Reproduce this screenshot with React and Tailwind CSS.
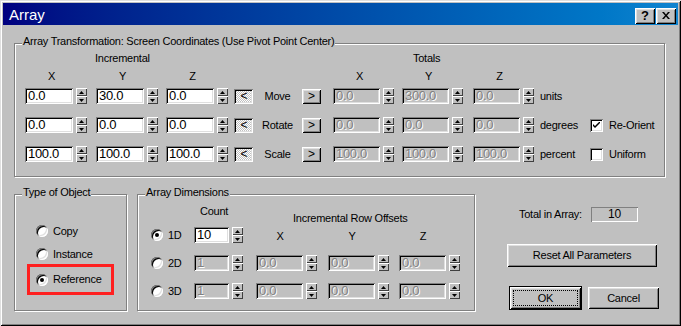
import React from "react";

const sunken =
  "shadow-[inset_1px_1px_#808080,inset_-1px_-1px_#fff,inset_2px_2px_#000,inset_-2px_-2px_#dfdfdf]";
const raised =
  "shadow-[inset_1px_1px_#fff,inset_-1px_-1px_#000,inset_2px_2px_#dfdfdf,inset_-2px_-2px_#808080]";
const raisedThin = "shadow-[inset_1px_1px_#fff,inset_-1px_-1px_#404040]";

function Edit({ value, className = "w-[48px]", disabled }) {
  return (
    <div
      className={`${className} h-[16px] shrink-0 ${sunken} pl-[3px] text-[13px] leading-[16px] tracking-[-0.3px] whitespace-nowrap overflow-hidden ${
        disabled
          ? "bg-[#c0c0c0] text-[#808080] [text-shadow:1px_1px_0_#fff]"
          : "bg-white text-black"
      }`}
    >
      {value}
    </div>
  );
}

function Spin({ className = "ml-[3px]" }) {
  return (
    <div className={`${className} w-[11px] h-[16px] shrink-0 flex flex-col`}>
      <div className={`h-[8px] bg-[#c0c0c0] ${raisedThin} flex items-center justify-center`}>
        <svg width="5" height="3" viewBox="0 0 5 3">
          <path d="M2.5 0L5 3H0z" fill="#000" />
        </svg>
      </div>
      <div className={`h-[8px] bg-[#c0c0c0] ${raisedThin} flex items-center justify-center`}>
        <svg width="5" height="3" viewBox="0 0 5 3">
          <path d="M0 0H5L2.5 3z" fill="#000" />
        </svg>
      </div>
    </div>
  );
}

function BackBtn() {
  return (
    <div
      className={`ml-[6px] w-[19px] h-[15px] shrink-0 ${sunken} bg-[repeating-conic-gradient(#fff_0_25%,#c0c0c0_0_50%)] bg-[length:2px_2px] flex items-center justify-center text-[12px] leading-none pl-[1px]`}
    >
      &lt;
    </div>
  );
}

function FwdBtn() {
  return (
    <div
      className={`w-[19px] h-[15px] shrink-0 bg-[#c0c0c0] ${raised} flex items-center justify-center text-[12px] leading-none`}
    >
      &gt;
    </div>
  );
}

function Check({ checked, label }) {
  return (
    <div className="flex items-center">
      <div className={`w-[13px] h-[13px] bg-white ${sunken} flex items-center justify-center`}>
        {checked && (
          <svg width="7" height="7" viewBox="0 0 7 7">
            <path d="M0 2v2l2 2l5-5V-1L2 4z" fill="#000" />
          </svg>
        )}
      </div>
      <span className="ml-[6px]">{label}</span>
    </div>
  );
}

function Radio({ on }) {
  return (
    <div
      className={`w-[12px] h-[12px] shrink-0 rounded-full bg-white shadow-[inset_1px_1px_#808080,inset_-1px_-1px_#fff,inset_2px_2px_#000,inset_-2px_-2px_#dfdfdf] flex items-center justify-center`}
    >
      {on && <div className="w-[4px] h-[4px] rounded-full bg-black" />}
    </div>
  );
}

function Group({ label, className, children }) {
  return (
    <div
      className={`relative shrink-0 border border-[#808080] shadow-[inset_1px_1px_#fff,1px_1px_#fff] ${className}`}
    >
      <span className="absolute -top-[9px] left-[7px] bg-[#c0c0c0] px-[1px] whitespace-nowrap">
        {label}
      </span>
      {children}
    </div>
  );
}

function TransformRow({ inc, label, totals, unit, check }) {
  return (
    <div className="flex items-center h-[16px]">
      <Edit value={inc[0]} />
      <Spin />
      <Edit value={inc[1]} className="w-[48px] ml-[9px]" />
      <Spin />
      <Edit value={inc[2]} className="w-[48px] ml-[8px]" />
      <Spin />
      <BackBtn />
      <span className="w-[49px] text-center">{label}</span>
      <FwdBtn />
      <Edit disabled value={totals[0]} className="w-[47px] ml-[12px]" />
      <Spin />
      <Edit disabled value={totals[1]} className="w-[47px] ml-[8px]" />
      <Spin />
      <Edit disabled value={totals[2]} className="w-[47px] ml-[10px]" />
      <Spin />
      <span className="ml-[6px] w-[50px]">{unit}</span>
      {check}
    </div>
  );
}

function Button({ children, className }) {
  return (
    <div className={`bg-[#c0c0c0] ${raised} flex items-center justify-center ${className}`}>
      {children}
    </div>
  );
}

export default function App() {
  return (
    <div className="w-[681px] h-[326px] bg-[#c0c0c0] p-[3px] flex flex-col text-black text-[11px] leading-[13px] tracking-[-0.25px] font-['Liberation_Sans',Arial,sans-serif] shadow-[inset_1px_1px_#dfdfdf,inset_-1px_-1px_#000,inset_2px_2px_#fff,inset_-2px_-2px_#808080] overflow-hidden">
      {/* title bar */}
      <div className="h-[22px] shrink-0 flex items-center pl-[6px] pr-[2px] bg-linear-to-r from-[#000080] to-[#1084d0]">
        <span className="text-white text-[15px] leading-none tracking-normal">Array</span>
        <div className="ml-auto mt-[3px] flex gap-[1px]">
          <div className={`w-[20px] h-[16px] bg-[#c0c0c0] ${raised} flex items-center justify-center font-bold text-[13px] leading-none tracking-normal`}>
            ?
          </div>
          <div className={`w-[20px] h-[16px] bg-[#c0c0c0] ${raised} flex items-center justify-center`}>
            <svg width="8" height="7" viewBox="0 0 8 7">
              <path d="M0 0h2l2 2.5L6 0h2L5 3.5L8 7H6L4 4.5L2 7H0l3-3.5z" fill="#000" />
            </svg>
          </div>
        </div>
      </div>

      {/* transformation group */}
      <Group
        label="Array Transformation: Screen Coordinates (Use Pivot Point Center)"
        className="mt-[18px] ml-[11px] w-[651px] h-[134px] pl-[10px] flex flex-col"
      >
        <div className="flex h-[13px] mt-[8px]">
          <span className="w-[388px] pl-[70px]">Incremental</span>
          <span>Totals</span>
        </div>
        <div className="flex h-[13px] mt-[5px]">
          <span className="w-[53px] text-center">X</span>
          <span className="w-[53px] ml-[18px] text-center">Y</span>
          <span className="w-[53px] ml-[17px] text-center">Z</span>
          <span className="w-[53px] ml-[114px] text-center">X</span>
          <span className="w-[53px] ml-[16px] text-center">Y</span>
          <span className="w-[53px] ml-[18px] text-center">Z</span>
        </div>
        <div className="mt-[5px] flex flex-col gap-[13px]">
          <TransformRow
            inc={["0.0", "30.0", "0.0"]}
            label="Move"
            totals={["0.0", "300.0", "0.0"]}
            unit="units"
          />
          <TransformRow
            inc={["0.0", "0.0", "0.0"]}
            label="Rotate"
            totals={["0.0", "0.0", "0.0"]}
            unit="degrees"
            check={<Check checked label="Re-Orient" />}
          />
          <TransformRow
            inc={["100.0", "100.0", "100.0"]}
            label="Scale"
            totals={["100.0", "100.0", "100.0"]}
            unit="percent"
            check={<Check label="Uniform" />}
          />
        </div>
      </Group>

      {/* bottom area */}
      <div className="mt-[17px] ml-[11px] flex">
        <Group label="Type of Object" className="w-[113px] h-[117px] flex flex-col">
          <div className="mt-[28px] pl-[21px] h-[16px] flex items-center">
            <Radio />
            <span className="ml-[5px]">Copy</span>
          </div>
          <div className="mt-[7px] pl-[21px] h-[16px] flex items-center">
            <Radio />
            <span className="ml-[5px]">Instance</span>
          </div>
          <div className="mt-[2px] ml-[12px] w-[87px] h-[31px] border-[3px] border-[#ff2020] pl-[6px] flex items-center">
            <Radio on />
            <span className="ml-[5px]">Reference</span>
          </div>
        </Group>

        <Group label="Array Dimensions" className="ml-[10px] w-[338px] h-[117px] flex">
          <div className="flex flex-col">
            <span className="mt-[10px] ml-[62px] h-[13px]">Count</span>
            {[
              ["1D", "10", true, "mt-[9px]"],
              ["2D", "1", false, "mt-[12px]"],
              ["3D", "1", false, "mt-[12px]"],
            ].map(([d, v, on, mt]) => (
              <div key={d} className={`${mt} pl-[13px] h-[16px] flex items-center`}>
                <Radio on={on} />
                <span className="ml-[5px] w-[26px]">{d}</span>
                <Edit value={v} disabled={!on} className="w-[35px]" />
                <Spin />
              </div>
            ))}
          </div>
          <div className="ml-[13px] flex flex-col">
            <span className="mt-[17px] ml-[37px] h-[13px]">Incremental Row Offsets</span>
            <div className="mt-[5px] h-[13px] flex">
              <span className="w-[48px] text-center">X</span>
              <span className="w-[48px] ml-[24px] text-center">Y</span>
              <span className="w-[48px] ml-[23px] text-center">Z</span>
            </div>
            {["mt-[12px]", "mt-[12px]"].map((mt, i) => (
              <div key={i} className={`${mt} h-[16px] flex items-center`}>
                <Edit disabled value="0.0" className="w-[47px]" />
                <Spin />
                <Edit disabled value="0.0" className="w-[47px] ml-[11px]" />
                <Spin />
                <Edit disabled value="0.0" className="w-[47px] ml-[10px]" />
                <Spin />
              </div>
            ))}
          </div>
        </Group>

        <div className="flex flex-col">
          <div className="mt-[13px] pl-[44px] flex items-center h-[15px]">
            <span className="w-[72px]">Total in Array:</span>
            <div className="w-[47px] h-[15px] shadow-[inset_1px_1px_#808080,inset_-1px_-1px_#fff] flex items-center justify-center text-[12px]">
              10
            </div>
          </div>
          <Button className="mt-[22px] ml-[32px] w-[150px] h-[23px]">Reset All Parameters</Button>
          <div className="mt-[19px] ml-[34px] flex items-center">
            <div className="w-[73px] h-[24px] border border-black">
              <Button className="w-full h-full relative">
                <div className="absolute inset-[3px] border border-dotted border-black" />
                OK
              </Button>
            </div>
            <Button className="ml-[6px] w-[71px] h-[22px]">Cancel</Button>
          </div>
        </div>
      </div>
    </div>
  );
}
